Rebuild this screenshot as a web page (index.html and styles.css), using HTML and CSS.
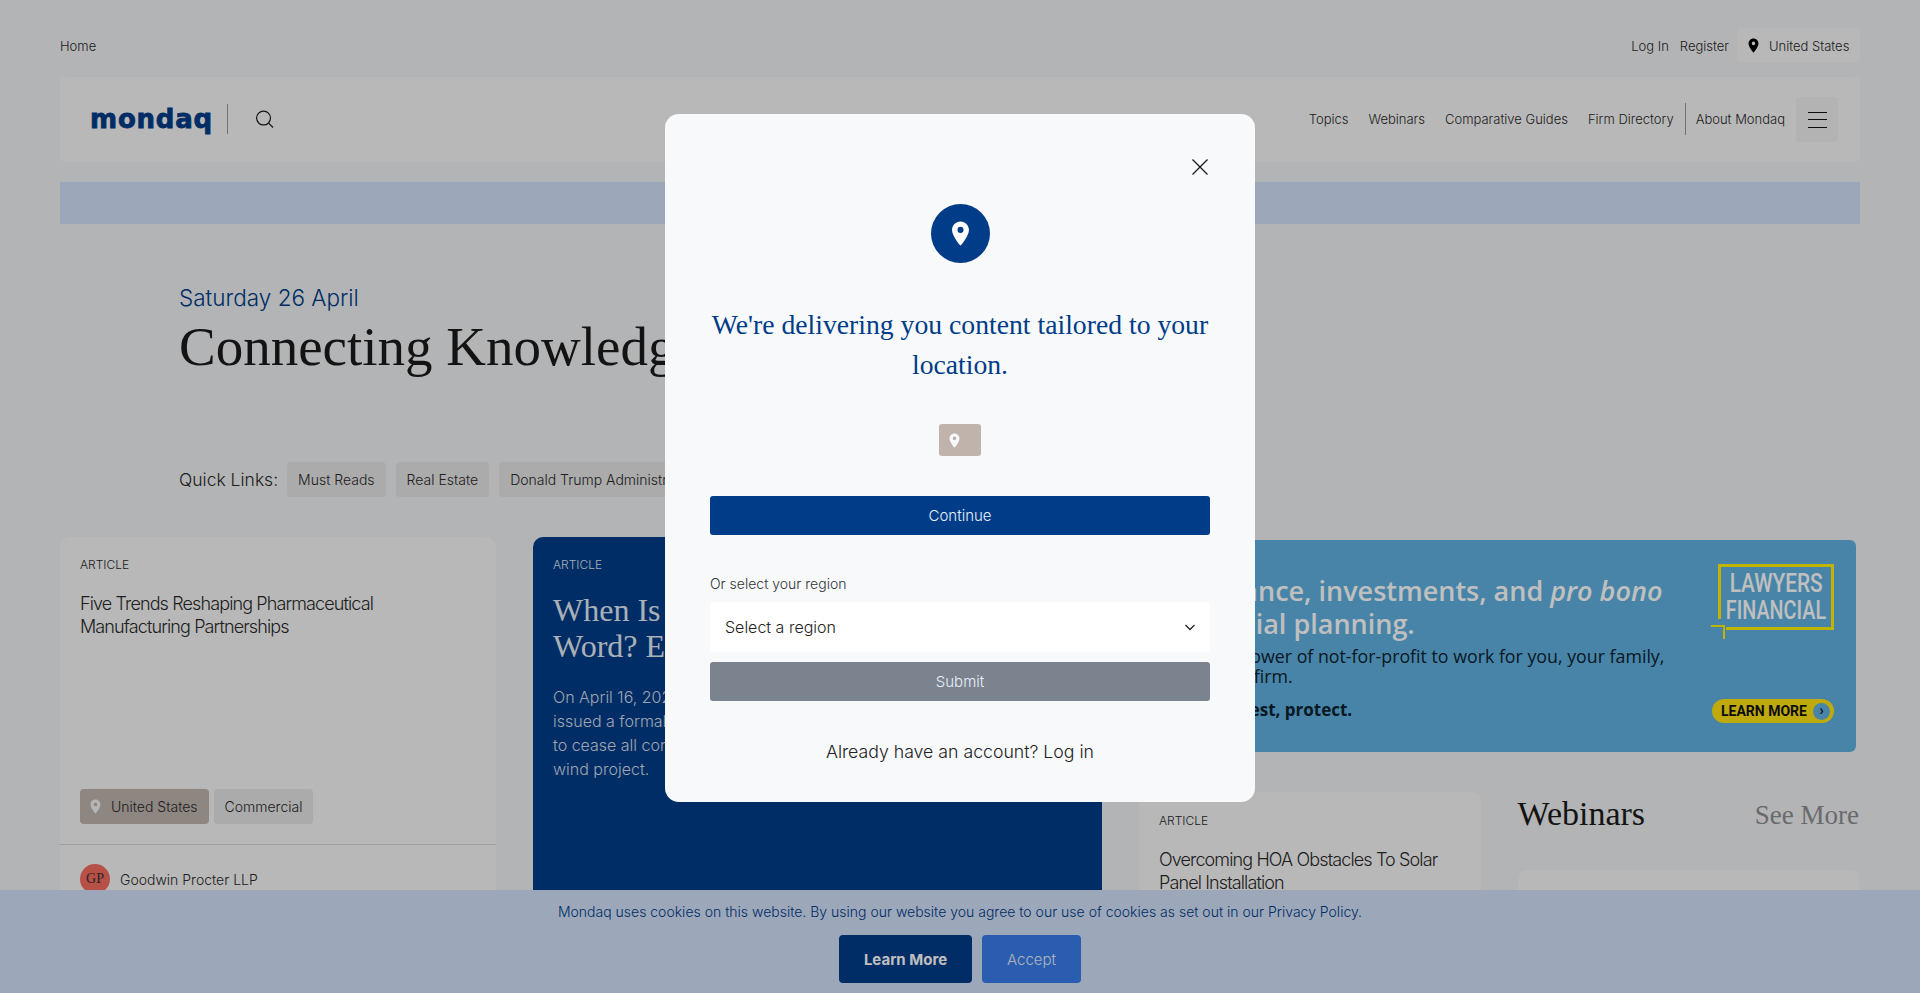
FILE: index.html
```html
<!DOCTYPE html>
<html lang="en">
<head>
<meta charset="utf-8">
<title>Mondaq</title>
<link rel="stylesheet" href="styles.css">
</head>
<body>
<svg class="defs" width="0" height="0" aria-hidden="true">
  <symbol id="pin" viewBox="0 0 24 24"><path fill-rule="evenodd" d="M12 2C8.100 2 5 5.100 5 9c0 5.200 7 13 7 13s7-7.800 7-13c0-3.900-3.100-7-7-7zm0 9.500a2.500 2.500 0 1 1 0-5 2.500 2.500 0 0 1 0 5z"/></symbol>
</svg>
<div class="page">
  <div class="topbar">
    <a class="top-link">Home</a>
    <div class="top-right">
      <a class="top-link">Log In</a>
      <a class="top-link">Register</a>
      <div class="country"><svg class="country-pin"><use href="#pin"/></svg><span>United States</span></div>
    </div>
  </div>
  <header class="header">
    <div class="brand">
      <span class="logo">mondaq</span>
      <span class="brand-sep"></span>
      <svg class="search" viewBox="0 0 20 20"><circle cx="9" cy="9" r="7.300"/><path d="M14.300 14.300 19 19"/></svg>
    </div>
    <nav class="nav">
      <a>Topics</a><a>Webinars</a><a>Comparative Guides</a><a class="firm">Firm Directory</a><a class="about">About Mondaq</a>
      <button class="burger"><i></i><i></i><i></i></button>
    </nav>
  </header>
  <div class="banner"></div>
  <section class="hero">
    <p class="date">Saturday 26 April</p>
    <h1 class="tagline">Connecting Knowledge &amp; People</h1>
    <div class="quick">
      <span class="quick-label">Quick Links:</span>
      <a class="chip">Must Reads</a><a class="chip">Real Estate</a><a class="chip">Donald Trump Administration</a>
    </div>
  </section>
  <main class="grid">
    <article class="card left">
      <div class="card-body">
        <p class="kicker">ARTICLE</p>
        <h3 class="card-title">Five Trends Reshaping Pharmaceutical Manufacturing Partnerships</h3>
        <div class="tags">
          <span class="tag tag-loc"><svg class="tag-pin"><use href="#pin"/></svg>United States</span>
          <span class="tag">Commercial</span>
        </div>
      </div>
      <div class="author"><span class="avatar">GP</span><span>Goodwin Procter LLP</span></div>
    </article>
    <article class="feature">
      <p class="kicker">ARTICLE</p>
      <h2 class="feature-title">When Is A Stop-Work Order The Final Word? Empire Wind</h2>
      <p class="feature-text">On April 16, 2025, the Secretary of the Interior<br>issued a formal order directing Empire Offshore<br>to cease all construction on the Empire offshore<br>wind project.</p>
    </article>
    <div class="side">
      <div class="ad">
        <div class="ad-copy">
          <p class="ad-head">Insurance, investments, and <em>pro bono</em> financial planning.</p>
          <p class="ad-text">Put the power of not-for-profit to work for you, your family, and your firm.</p>
          <p class="ad-strong">Save, invest, protect.</p>
        </div>
        <div class="ad-aside">
          <div class="ad-logo"><span class="ad-l1">LAWYERS</span><span class="ad-l2">FINANCIAL</span></div>
          <div class="ad-cta">LEARN MORE<span class="ad-dot">›</span></div>
        </div>
      </div>
      <div class="side-row">
        <article class="card small">
          <p class="kicker">ARTICLE</p>
          <h3 class="card-title">Overcoming HOA Obstacles To Solar Panel Installation</h3>
        </article>
        <section class="webinars">
          <div class="web-head"><h2>Webinars</h2><a>See More</a></div>
          <div class="web-card"></div>
        </section>
      </div>
    </div>
  </main>
</div>

<div class="cookie">
  <p>Mondaq uses cookies on this website. By using our website you agree to our use of cookies as set out in our Privacy Policy.</p>
  <div class="cookie-actions"><button class="learn">Learn More</button><button class="accept">Accept</button></div>
</div>

<div class="overlay">
  <div class="modal">
    <svg class="close" viewBox="0 0 16 16"><path d="M.5.500l15 15M15.500.500l-15 15"/></svg>
    <div class="pin-circle"><svg><use href="#pin"/></svg></div>
    <h2 class="modal-title">We're delivering you content tailored to your location.</h2>
    <div class="loc-chip"><svg><use href="#pin"/></svg></div>
    <button class="btn primary">Continue</button>
    <label class="region-label">Or select your region</label>
    <div class="select"><span>Select a region</span><svg viewBox="0 0 12 8"><path d="M1.500 2l4.500 4.500L10.500 2"/></svg></div>
    <button class="btn disabled">Submit</button>
    <p class="already">Already have an account? Log in</p>
  </div>
</div>
</body>
</html>
```
FILE: styles.css
```css
* { box-sizing: border-box; }
html, body { margin: 0; height: 993px; overflow: hidden; }
body { background: #eff0f2; font-family: Inter, "Liberation Sans", sans-serif; font-weight: 300; color: #2a2a2a; }
p { margin: 0; }
h1, h2, h3 { margin: 0; font-weight: 400; }
button { font-family: inherit; border: 0; }
.defs { position: absolute; }
.page { margin: 0 60px; width: 1800px; height: 993px; padding-top: 28px; overflow: hidden; }

/* top */
.topbar { display: flex; justify-content: space-between; align-items: center; height: 34px; margin-bottom: 15px; padding-top: 2px; }
.top-link { font-size: 13px; }
.top-right { display: flex; align-items: center; gap: 11px; margin-top: -2px; }
.top-right .top-link { padding-top: 2px; }
.country { display: flex; align-items: center; gap: 7px; height: 34px; width: 123px; margin-left: -3px; padding: 2px 0 0 8px; background: #f6f6f6; border-radius: 4px; font-size: 13px; }
.country-pin { width: 17px; height: 17px; fill: #000; margin-top: -2px; }

.header { display: flex; justify-content: space-between; align-items: center; height: 85px; background: #f6f6f6; border-radius: 6px; padding: 0 22px 2px 30px; }
.brand { display: flex; align-items: center; }
.logo { font-family: "DejaVu Sans", sans-serif; font-weight: 700; font-size: 26px; color: #003c88; -webkit-text-stroke: .8px #003c88; letter-spacing: .8px; width: 122px; line-height: 30px; white-space: nowrap; }
.brand-sep { width: 1px; height: 30px; background: #9a9a9a; margin: 0 28px 0 15px; }
.search { width: 19px; height: 20px; fill: none; stroke: #1c1c1c; stroke-width: 1.300; margin-left: -1px; }
.nav { display: flex; align-items: center; font-size: 13px; }
.nav a { margin-right: 20px; }
.nav .firm { margin-right: 11px; }
.nav .about { border-left: 1px solid #9a9a9a; padding: 8px 0 8px 10px; margin-right: 11px; }
.burger { display: flex; flex-direction: column; justify-content: center; align-items: center; gap: 6.500px; width: 42px; height: 45px; background: #efefef; border-radius: 4px; padding: 0; margin-top: 2px; }
.burger i { display: block; width: 19px; height: 1px; background: #111; }

.banner { height: 42px; margin-top: 20px; background: #d0e0f8; }

/* hero */
.hero { padding: 60px 0 0 119px; }
.date { font-size: 22.500px; line-height: 28px; color: #003c88; }
.tagline { font-family: "Liberation Serif", serif; font-size: 55px; line-height: 64px; color: #1a1a1a; margin-top: 3px; white-space: nowrap; }
.quick { display: flex; align-items: center; margin-top: 83px; white-space: nowrap; }
.quick-label { font-size: 17.500px; margin-right: 9px; }
.chip { display: block; height: 35px; line-height: 35px; padding: 0 11px; margin-right: 10px; background: #e4e4e4; border-radius: 4px; font-size: 14px; }

/* grid */
.grid { display: grid; grid-template-columns: 436px 569px 720px; column-gap: 37px; margin-top: 40px; }
.card { background: #f6f6f6; border-radius: 10px; }
.left { height: 470px; }
.card-body { height: 308px; padding: 21px 20px 20px; display: flex; flex-direction: column; border-bottom: 1px solid #d4d4d4; }
.kicker { font-size: 12px; line-height: 14px; }
.card-title { font-size: 18px; line-height: 23px; letter-spacing: -.88px; font-weight: 300; margin-top: 20px; }
.tags { display: flex; gap: 5px; margin-top: auto; }
.tag { display: flex; align-items: center; height: 35px; padding: 0 11px; background: #e4e4e4; border-radius: 4px; font-size: 14px; }
.tag-loc { background: #bdb3ad; padding-left: 7px; }
.tag-pin { width: 17px; height: 17px; fill: #f2f2f2; margin-right: 7px; }
.author { display: flex; align-items: center; gap: 10px; padding: 19px 20px; font-size: 14px; }
.avatar { width: 30px; height: 30px; border-radius: 50%; background: #f46b5f; color: #333; font-family: "Liberation Serif", serif; font-size: 14px; display: flex; align-items: center; justify-content: center; }

.feature { height: 470px; background: #003c88; border-radius: 10px 10px 0 0; padding: 21px 20px 20px; color: #dbe4f0; }
.feature-title { font-family: "Liberation Serif", serif; font-size: 32px; line-height: 36px; margin-top: 20px; color: #e4ebf4; }
.feature-text { font-size: 16px; line-height: 24px; margin-top: 21px; color: #d4dde8; }

.side { padding-top: 3px; }
.ad { display: flex; justify-content: space-between; width: 717px; height: 212px; background: #5fb1df; border-radius: 6px; padding: 35px 22px 29px 36px; color: #0d2230; }
.ad-copy { width: 520px; font-family: "Open Sans", sans-serif; }
.ad-head { font-size: 27px; font-weight: 600; line-height: 32.500px; color: #fff; }
.ad-text { font-size: 17.800px; line-height: 20px; font-weight: 400; margin-top: 6px; }
.ad-strong { font-size: 17px; font-weight: 700; margin-top: 13px; line-height: 22px; }
.ad-aside { display: flex; flex-direction: column; justify-content: space-between; align-items: flex-end; width: 125px; margin: -11px 0 0; }
.ad-logo { position: relative; width: 116px; height: 66px; border: 3px solid #fff000; color: #fff; font-family: Roboto, sans-serif; font-size: 26px; font-weight: 500; line-height: 27px; display: flex; flex-direction: column; align-items: center; padding-top: 3px; }
.ad-logo::before { content: ""; position: absolute; left: -3px; bottom: -3px; width: 8px; height: 11px; background: #5fb1df; }
.ad-logo::after { content: ""; position: absolute; left: -10px; bottom: -12px; width: 12px; height: 12px; border-top: 2.500px solid #fff000; border-right: 2.500px solid #fff000; }
.ad-l1, .ad-l2 { display: block; white-space: nowrap; }
.ad-l1 { transform: scaleX(.8); }
.ad-l2 { transform: scaleX(.76); }
.ad-cta { display: flex; align-items: center; justify-content: space-between; width: 122px; height: 24px; padding: 0 4px 0 9px; background: #ffe313; border-radius: 12px; font-family: Roboto, sans-serif; font-size: 14px; font-weight: 700; color: #111; }
.ad-dot { width: 17px; height: 17px; border-radius: 50%; background: #5fb1df; text-align: center; line-height: 15px; }

.side-row { display: flex; margin-top: 40px; }
.small { width: 342px; height: 300px; padding: 22px 20px; }
.webinars { width: 342px; margin-left: 37px; }
.web-head { display: flex; justify-content: space-between; align-items: center; height: 44px; font-family: "Liberation Serif", serif; }
.web-head h2 { font-size: 34px; color: #1a1a1a; }
.web-head a { font-size: 27px; color: #8d8e90; padding-top: 3px; }
.web-card { height: 200px; margin-top: 34px; background: #f6f6f6; border-radius: 8px; }

/* cookie */
.cookie { position: fixed; left: 0; right: 0; bottom: 0; height: 103px; background: #d0e0f8; text-align: center; padding-top: 12px; }
.cookie p { font-size: 14px; line-height: 20px; color: #003c88; }
.cookie-actions { display: flex; justify-content: center; gap: 10px; margin-top: 13px; }
.learn, .accept { height: 48px; border-radius: 4px; font-size: 15px; }
.learn { width: 133px; background: #003c88; color: #fff; font-weight: 700; }
.accept { width: 99px; background: #387cea; color: #e6eefb; font-weight: 300; }

/* modal */
.overlay { position: fixed; inset: 0; background: rgba(0,0,0,.25); display: flex; justify-content: center; padding-top: 114px; }
.modal { position: relative; width: 590px; height: 688px; background: #f7f9fb; border-radius: 14px; padding: 90px 45px 0; display: flex; flex-direction: column; align-items: center; }
.close { position: absolute; top: 45px; right: 47px; width: 16px; height: 16px; fill: none; stroke: #1a1a1a; stroke-width: 1.300; }
.pin-circle { width: 59px; height: 59px; border-radius: 50%; background: #003c88; display: flex; align-items: center; justify-content: center; }
.pin-circle svg { width: 29px; height: 29px; fill: #fff; }
.modal-title { font-family: "Liberation Serif", serif; font-size: 27.700px; line-height: 40px; color: #003c88; text-align: center; margin-top: 42px; width: 510px; }
.loc-chip { width: 42px; height: 32px; margin-top: 39px; background: #bfb3ac; border-radius: 3px; padding-left: 7px; display: flex; align-items: center; }
.loc-chip svg { width: 17px; height: 17px; fill: #f7f9fb; }
.btn { display: block; width: 500px; height: 39px; border-radius: 3px; font-size: 15px; font-weight: 300; color: #e8f0fb; }
.primary { background: #003c88; margin-top: 40px; }
.disabled { background: #7a838e; margin-top: 10px; }
.region-label { align-self: flex-start; font-size: 14px; line-height: 20px; margin-top: 39px; color: #333; }
.select { display: flex; align-items: center; justify-content: space-between; width: 500px; height: 50px; margin-top: 8px; padding: 0 14px 0 15px; background: #fff; border-radius: 3px; font-size: 16px; color: #222; }
.select svg { width: 12px; height: 8px; fill: none; stroke: #222; stroke-width: 1.300; }
.already { font-size: 17.700px; line-height: 24px; margin-top: 39px; color: #222; }
```
